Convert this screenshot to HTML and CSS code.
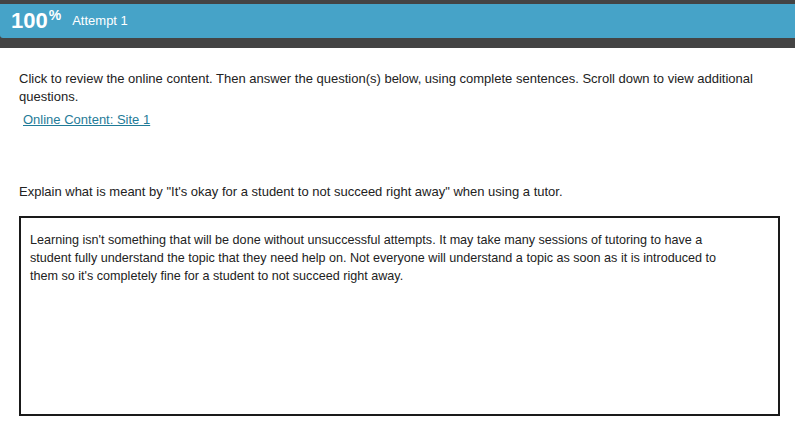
FILE: index.html
```html
<!DOCTYPE html>
<html>
<head>
<meta charset="utf-8">
<link rel="stylesheet" href="styles.css">
</head>
<body>
<div class="topbar">
  <div class="scorebar">
    <span class="score">100<sup class="pct">%</sup></span>
    <span class="attempt">Attempt 1</span>
  </div>
</div>
<div class="content">
  <p class="intro">Click to review the online content. Then answer the question(s) below, using complete sentences. Scroll down to view additional questions.</p>
  <a class="link" href="#">Online Content: Site 1</a>
  <p class="question">Explain what is meant by "It's okay for a student to not succeed right away" when using a tutor.</p>
  <div class="answer">Learning isn't something that will be done without unsuccessful attempts. It may take many sessions of tutoring to have a student fully understand the topic that they need help on. Not everyone will understand a topic as soon as it is introduced to them so it's completely fine for a student to not succeed right away.</div>
</div>
</body>
</html>
```
FILE: styles.css
```css
html, body {
  margin: 0;
  padding: 0;
  background: #fff;
  font-family: "Liberation Sans", Arial, sans-serif;
  color: #222;
}
.topbar {
  background: #444;
  padding: 4px 0 10px 0;
}
.scorebar {
  background: #46a3c8;
  height: 34px;
  display: flex;
  align-items: center;
  padding-left: 11px;
  border-bottom-left-radius: 3px;
  color: #fff;
}
.score {
  font-size: 22px;
  font-weight: bold;
  line-height: 1;
}
.pct {
  font-size: 14px;
  font-weight: bold;
  vertical-align: 8px;
  line-height: 0;
  margin-left: 1px;
}
.attempt {
  font-size: 13px;
  margin-left: 11px;
  margin-top: -2px;
}
.content {
  padding: 0 16px 0 19px;
}
.intro {
  font-size: 13px;
  line-height: 18px;
  margin: 22px 0 0 0;
  padding-right: 20px;
}
.link {
  display: inline-block;
  margin: 5px 0 0 4px;
  font-size: 13px;
  line-height: 18px;
  color: #1f7b98;
}
.question {
  font-size: 13px;
  line-height: 18px;
  margin: 54px 0 0 0;
}
.answer {
  margin-top: 15px;
  box-sizing: border-box;
  width: 761px;
  height: 200px;
  border: 2px solid #1a1a1a;
  padding: 13px 36px 5px 9px;
  font-size: 12.6px;
  line-height: 18px;
  color: #222;
}
```
